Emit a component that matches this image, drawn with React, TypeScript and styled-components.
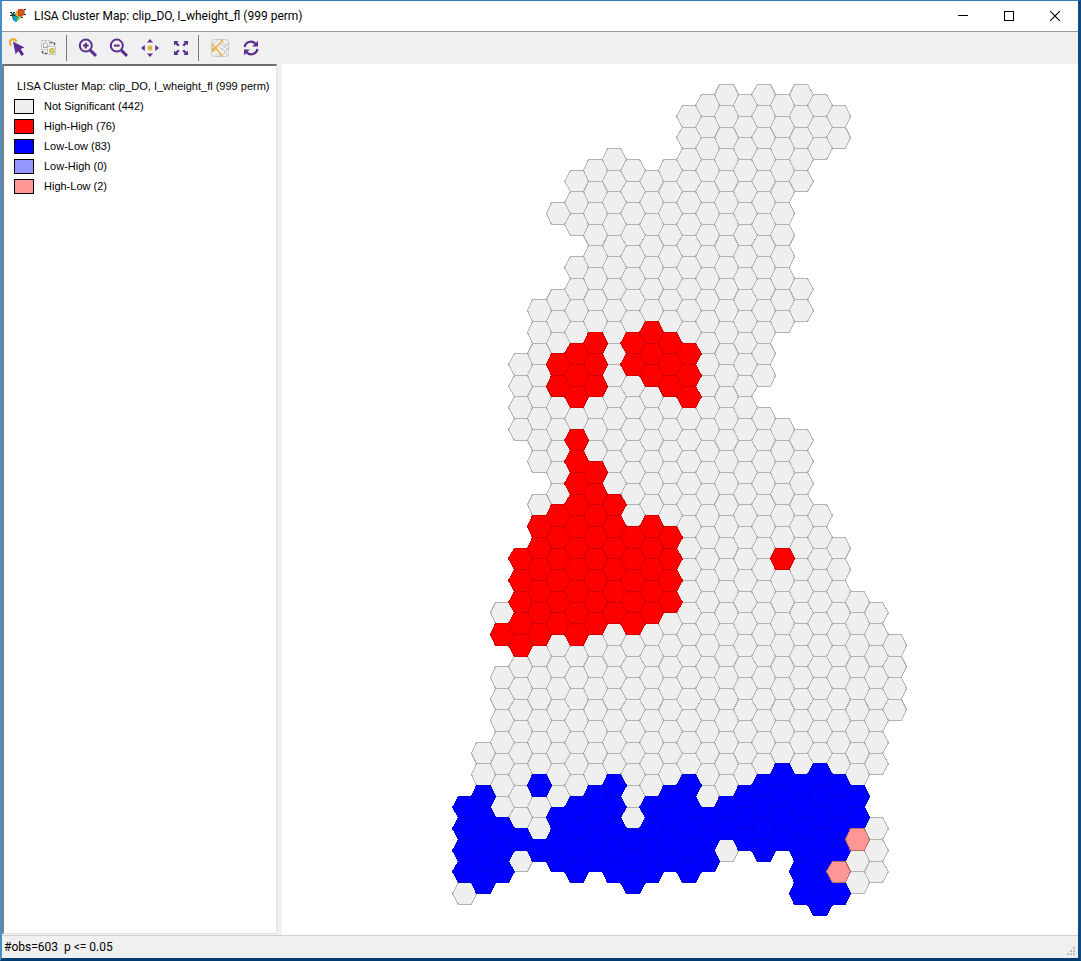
import React from "react";
import styled, { createGlobalStyle } from "styled-components";

const GlobalStyle = createGlobalStyle`
  *, *::before, *::after { box-sizing: border-box; }
  html, body, #root { height: 100%; margin: 0; }
  body { background: #003c6e; overflow: hidden; }
`;

const Window = styled.div`
  display: flex;
  flex-direction: column;
  height: 100%;
  background: #f0f0f0;
  border-style: solid;
  border-width: 1px 3px 3px 2px;
  border-color: #2f78b4 #0b4a85 #003c6e #4a8fc4;
  color: #000;
  font-family: Roboto, "Open Sans", sans-serif;
  font-size: 12px;
`;

const TitleBar = styled.header`
  display: flex;
  align-items: center;
  flex: none;
  height: 31px;
  padding-left: 8px;
  background: #fff;
  border-bottom: 1px solid #969a9d;
`;

const Title = styled.h1`
  flex: 1;
  margin: 0 0 0 8px;
  font-size: 12px;
  line-height: 16px;
  font-weight: 400;
  white-space: nowrap;
`;

const CaptionButton = styled.button`
  display: flex;
  align-items: center;
  justify-content: center;
  width: 46px;
  height: 30px;
  padding: 0;
  border: 0;
  background: transparent;
  &:hover { background: #e5e5e5; }
`;

const Toolbar = styled.nav`
  display: flex;
  align-items: center;
  flex: none;
  height: 32px;
`;

const ToolButton = styled.button`
  display: flex;
  align-items: center;
  justify-content: center;
  width: 31px;
  height: 30px;
  padding: 0;
  border: 0;
  background: transparent;
  &:hover { background: #dce9f5; }
`;

const ToolSeparator = styled.span`
  width: 1px;
  height: 26px;
  margin: 0 5px 0 2px;
  background: #7c7c7c;
`;

const Workspace = styled.main`
  display: flex;
  flex: 1;
  min-height: 0;
`;

const LegendPane = styled.aside`
  flex: none;
  width: 275px;
  margin-bottom: 1px;
  padding: 13px 0 0 10px;
  background: #fff;
  border: 1px solid #e3e3e3;
  border-top: 2px solid #6e6e6e;
  border-left: 2px solid #808080;
  font-family: "Liberation Sans", Arial, sans-serif;
  font-size: 11px;
  line-height: 14px;
  white-space: nowrap;
`;

const LegendTitle = styled.h2`
  margin: 0 0 3px 3px;
  font-size: 11px;
  line-height: 14px;
  font-weight: 400;
`;

const LegendList = styled.ul`
  margin: 0;
  padding: 0;
  list-style: none;
`;

const LegendItem = styled.li`
  display: flex;
  align-items: center;
  gap: 10px;
  height: 20px;
`;

const Swatch = styled.span<{ $fill: string }>`
  width: 20px;
  height: 15px;
  border: 1px solid #000;
  background: ${(p) => p.$fill};
`;

const MapPane = styled.section`
  flex: 1;
  min-width: 0;
  margin-left: 5px;
  padding: 19px 20px;
  background: #fff;
`;

const MapDrawing = styled.svg`
  display: block;
  width: 100%;
  height: 100%;
`;

const StatusBar = styled.footer`
  display: flex;
  align-items: center;
  justify-content: space-between;
  flex: none;
  height: 23px;
  padding-left: 2px;
  border-top: 1px solid #d0d0d0;
  line-height: 16px;
  white-space: pre;
`;

const Grip = styled.svg`
  align-self: flex-end;
  margin: 0 2px 2px 0;
`;

type Kind = "ns" | "hh" | "ll" | "hl";

const KINDS: Record<Kind, { fill: string; stroke: string }> = {
  ns: { fill: "#efefef", stroke: "#b2b2b2" },
  hl: { fill: "#ff9696", stroke: "#b86c6c" },
  hh: { fill: "#ff0000", stroke: "#d20000" },
  ll: { fill: "#0000ff", stroke: "#0000dc" },
};

type Run = [Kind, number, number];

// One entry per hexagon column; each run gives its first and last half-row.
const COLUMNS: Run[][] = [
  [["ll", 66, 72], ["ns", 74, 74]],
  [["ns", 61, 63], ["ll", 65, 73]],
  [["ns", 48, 48], ["hh", 50, 50], ["ns", 54, 66], ["ll", 68, 72]],
  [["ns", 25, 31], ["hh", 43, 51], ["ns", 53, 67], ["ll", 69, 69], ["ns", 71, 71]],
  [["ns", 20, 34], ["ns", 38, 38], ["hh", 40, 50], ["ns", 52, 62], ["ll", 64, 64], ["ns", 66, 68], ["ll", 70, 70]],
  [["ns", 11, 11], ["ns", 19, 23], ["hh", 25, 27], ["ns", 29, 37], ["hh", 39, 49], ["ns", 51, 65], ["ll", 67, 71]],
  [["ns", 8, 12], ["ns", 16, 22], ["hh", 24, 28], ["ns", 30, 30], ["hh", 32, 50], ["ns", 52, 64], ["ll", 66, 72]],
  [["ns", 7, 21], ["hh", 23, 27], ["ns", 29, 33], ["hh", 35, 49], ["ns", 51, 63], ["ll", 65, 71]],
  [["ns", 6, 36], ["hh", 38, 48], ["ns", 50, 62], ["ll", 64, 72]],
  [["ns", 7, 21], ["hh", 23, 25], ["ns", 27, 39], ["hh", 41, 49], ["ns", 51, 67], ["ll", 69, 73]],
  [["ns", 8, 20], ["hh", 22, 26], ["ns", 28, 38], ["hh", 40, 48], ["ns", 50, 64], ["ll", 66, 72]],
  [["ns", 7, 21], ["hh", 23, 27], ["ns", 29, 39], ["hh", 41, 47], ["ns", 49, 63], ["ll", 65, 71]],
  [["ns", 2, 22], ["hh", 24, 28], ["ns", 30, 62], ["ll", 64, 72]],
  [["ns", 1, 65], ["ll", 67, 71]],
  [["ns", 0, 64], ["ll", 66, 68], ["ns", 70, 70]],
  [["ns", 1, 63], ["ll", 65, 69]],
  [["ns", 0, 26], ["ns", 30, 62], ["ll", 64, 70]],
  [["ns", 1, 21], ["ns", 31, 41], ["hh", 43, 43], ["ns", 45, 61], ["ll", 63, 69]],
  [["ns", 0, 8], ["ns", 18, 20], ["ns", 32, 62], ["ll", 64, 74]],
  [["ns", 1, 5], ["ns", 39, 61], ["ll", 63, 75]],
  [["ns", 2, 4], ["ns", 42, 62], ["ll", 64, 70], ["hl", 72, 72], ["ll", 74, 74]],
  [["ns", 47, 63], ["ll", 65, 67], ["hl", 69, 69], ["ns", 71, 73]],
  [["ns", 48, 62], ["ns", 68, 72]],
  [["ns", 51, 57]],
];

// Neighbouring cells share these rounded coordinates, so their edges coincide.
const rowY = (k: number) => Math.floor(10.793 * k) + 1.5;
const outerX = (col: number) => Math.round(18.7 * col + 0.1) + 0.5;
const innerX = (col: number) => Math.round(18.7 * col + 5.5) + 0.5;

function hexPath(col: number, k: number) {
  const [a, b, c, d] = [outerX(col), innerX(col), outerX(col + 1), innerX(col + 1)];
  const [top, mid, bottom] = [k, k + 1, k + 2].map(rowY);
  return `M${a} ${mid}L${b} ${top}H${c}L${d} ${mid}L${c} ${bottom}H${b}Z`;
}

function kindPath(kind: Kind) {
  let path = "";
  COLUMNS.forEach((runs, col) =>
    runs.forEach(([k, from, to]) => {
      if (k !== kind) return;
      for (let row = from; row <= to; row += 2) path += hexPath(col, row);
    })
  );
  return path;
}

const DRAW_ORDER: Kind[] = ["ns", "hh", "ll", "hl"];

const ClusterMap = () => (
  <MapDrawing viewBox="0 0 456 833" role="img" aria-label="LISA cluster map">
    {DRAW_ORDER.map((kind) => (
      <path
        key={kind}
        d={kindPath(kind)}
        fill={KINDS[kind].fill}
        stroke={KINDS[kind].stroke}
        strokeWidth="1"
        shapeRendering="crispEdges"
      />
    ))}
  </MapDrawing>
);

const PURPLE = "#5b2d91";
const GOLD = "#e8ae2c";

const Icon = ({ children }: { children: React.ReactNode }) => (
  <svg width="20" height="20" viewBox="0 0 20 20" fill="none" aria-hidden="true">
    {children}
  </svg>
);

const SelectIcon = () => (
  <Icon>
    <path d="M3.6 7.4A3.3 3.3 0 1 1 8.4 3.6" stroke={GOLD} strokeWidth="2.2" />
    <path d="M5 3.5L16.5 9.4L12.6 11L16 16.2L13.6 18L10.2 13L7.6 16.2Z" fill={PURPLE} />
  </Icon>
);

const CloneIcon = () => (
  <Icon>
    <rect x="2.5" y="2.5" width="8" height="9" stroke="#b4b4b4" strokeDasharray="2 1" />
    <path d="M4.5 5.5L7 4.5L8.5 6.5L7.5 9.5H4.5Z" stroke="#a8a8a8" fill="#fafafa" />
    <rect x="8.5" y="8.5" width="8" height="8" fill="#f4f4f4" stroke="#b4b4b4" strokeDasharray="2 1" />
    <path d="M10.5 11.5L13 10.5L15 11V15H11Z" fill="#dcd84a" stroke="#b4b060" />
    <path d="M12 4.5H15.5V6.5M7 15.5H3.5V13.5" stroke="#9a9a9a" />
    <path d="M12.4 3V6L11 4.5ZM14.2 5.5H16.8L15.5 7.2ZM6.6 14V17L8 15.5ZM2.2 14.5H4.8L3.5 12.8Z" fill="#333" />
  </Icon>
);

const ZoomIcon = ({ plus }: { plus?: boolean }) => (
  <Icon>
    <circle cx="7.8" cy="7.6" r="6" stroke={PURPLE} strokeWidth="2" />
    <path d="M12.4 12.4L18 17.8" stroke={PURPLE} strokeWidth="3" />
    <path d={plus ? "M5 7.6H10.6M7.8 4.8V10.4" : "M5 7.6H10.6"} stroke={PURPLE} strokeWidth="2" />
  </Icon>
);

const PanIcon = () => (
  <Icon>
    <path d="M10 1L13 4.6H7ZM10 19L13 15.4H7ZM1 10L4.8 7V13ZM19 10L15.2 7V13Z" fill={PURPLE} />
    <circle cx="10" cy="10" r="2.4" fill={GOLD} />
  </Icon>
);

const ExtentIcon = () => (
  <Icon>
    <path
      d="M3 3H7.6L6.2 4.4L8.6 6.9L7 8.5L4.5 6.1L3 7.6ZM17 3V7.6L15.5 6.1L13 8.5L11.4 6.9L13.8 4.4L12.4 3ZM3 17V12.4L4.5 13.9L7 11.5L8.6 13.1L6.2 15.6L7.6 17ZM17 17H12.4L13.8 15.6L11.4 13.1L13 11.5L15.5 13.9L17 12.4Z"
      fill={PURPLE}
    />
  </Icon>
);

const BasemapIcon = () => (
  <Icon>
    <rect x="1.5" y="1.5" width="17" height="17" rx="3" fill="#f1f1f3" stroke="#c8c8cc" />
    <path d="M10 6Q14 7 18 12M9 9Q13 10 17 17M12 18Q15 14 18 10M11 12Q15 9 18 5M10 2Q13 6 18 8M3 6Q6 4 7 2M5 17Q9 16 12 18" stroke="#c6c6d0" />
    <path d="M2 6L12.5 18M13 2L2 13.5M2 10L5 13" stroke="#ecb548" strokeWidth="1.8" />
  </Icon>
);

const RefreshIcon = () => (
  <Icon>
    <path d="M3.6 9A6.2 6.2 0 0 1 14.4 5.8M16.4 11A6.2 6.2 0 0 1 5.6 14.2" stroke={PURPLE} strokeWidth="2.2" />
    <path d="M17 2.8V8.6H11.2ZM3 17.2V11.4H8.8Z" fill={PURPLE} />
  </Icon>
);

const AppIcon = () => (
  <svg width="16" height="16" viewBox="0 0 16 16" aria-hidden="true">
    <path d="M2 5L5 6L7 4L9 6L8 12L6 14L3 12L2 9Z" fill="#1f9a50" />
    <path d="M1 5L4 5.5L5 8L2 8Z" fill="#1c4a2c" />
    <path d="M3 8.5L6 8L8 11L6 14L3 12Z" fill="#1898c8" />
    <path d="M6 3L9 2V8L6 8Z" fill="#f0a81e" />
    <path d="M8 1H13L15 3L14 7L11 9L8 8Z" fill="#d8481c" />
    <path d="M10 3L13 3.5L12 6.5L10 6Z" fill="#a87424" />
    <path d="M8 8L11 9L9 12L7 12.5Z" fill="#8cc63c" />
    <path d="M0 4.5H2M0 7.5H2M3 4.5H5M14 1.5H16M14 6.5H16M11 9.5H13" stroke="#222" fill="none" />
  </svg>
);

const LEGEND = [
  { label: "Not Significant (442)", fill: "#efefef" },
  { label: "High-High (76)", fill: "#ff0000" },
  { label: "Low-Low (83)", fill: "#0000ff" },
  { label: "Low-High (0)", fill: "#9696ff" },
  { label: "High-Low (2)", fill: "#ff9696" },
];

const TITLE = "LISA Cluster Map: clip_DO, I_wheight_fl (999 perm)";

export default function App() {
  return (
    <>
      <GlobalStyle />
      <Window>
        <TitleBar>
          <AppIcon />
          <Title>{TITLE}</Title>
          <CaptionButton aria-label="Minimize">
            <svg width="10" height="10" viewBox="0 0 10 10">
              <path d="M0 4.5H10" stroke="#000" />
            </svg>
          </CaptionButton>
          <CaptionButton aria-label="Maximize">
            <svg width="10" height="10" viewBox="0 0 10 10">
              <rect x="0.5" y="0.5" width="9" height="9" fill="none" stroke="#000" />
            </svg>
          </CaptionButton>
          <CaptionButton aria-label="Close">
            <svg width="10" height="10" viewBox="0 0 10 10">
              <path d="M0 0L10 10M10 0L0 10" stroke="#000" strokeWidth="1.1" />
            </svg>
          </CaptionButton>
        </TitleBar>
        <Toolbar aria-label="Map tools">
          <ToolButton aria-label="Select"><SelectIcon /></ToolButton>
          <ToolButton aria-label="Invert selection"><CloneIcon /></ToolButton>
          <ToolSeparator />
          <ToolButton aria-label="Zoom in"><ZoomIcon plus /></ToolButton>
          <ToolButton aria-label="Zoom out"><ZoomIcon /></ToolButton>
          <ToolButton aria-label="Pan"><PanIcon /></ToolButton>
          <ToolButton aria-label="Full extent"><ExtentIcon /></ToolButton>
          <ToolSeparator />
          <ToolButton aria-label="Base map"><BasemapIcon /></ToolButton>
          <ToolButton aria-label="Refresh"><RefreshIcon /></ToolButton>
        </Toolbar>
        <Workspace>
          <LegendPane>
            <LegendTitle>{TITLE}</LegendTitle>
            <LegendList>
              {LEGEND.map((item) => (
                <LegendItem key={item.label}>
                  <Swatch $fill={item.fill} />
                  {item.label}
                </LegendItem>
              ))}
            </LegendList>
          </LegendPane>
          <MapPane>
            <ClusterMap />
          </MapPane>
        </Workspace>
        <StatusBar>
          <span>{"#obs=603  p <= 0.05"}</span>
          <Grip width="9" height="9" viewBox="0 0 9 9" aria-hidden="true">
            <path d="M6 0h2v2h-2zM3 3h2v2h-2zM6 3h2v2h-2zM0 6h2v2h-2zM3 6h2v2h-2zM6 6h2v2h-2z" fill="#bfbfbf" />
          </Grip>
        </StatusBar>
      </Window>
    </>
  );
}
